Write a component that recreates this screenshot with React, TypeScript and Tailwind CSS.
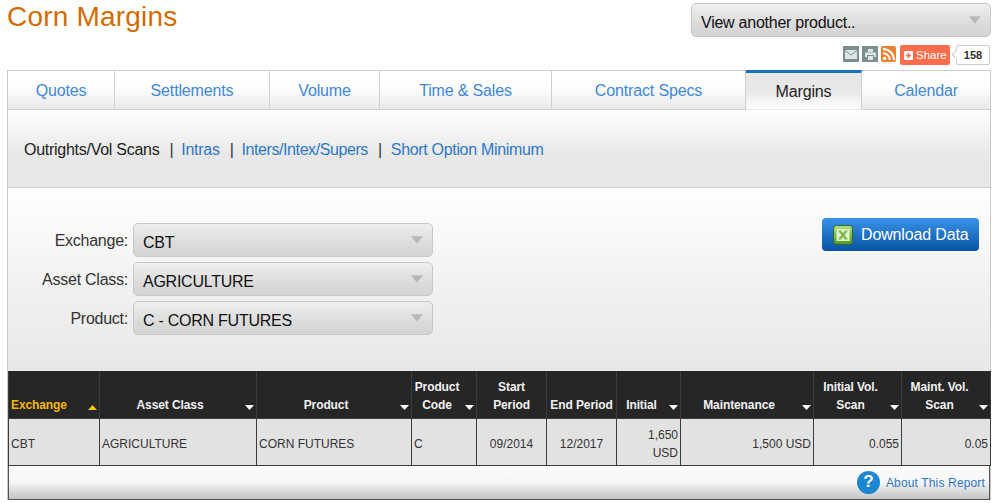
const tabs = [
  { label: "Quotes", width: "w-[107px]" },
  { label: "Settlements", width: "w-[155px]" },
  { label: "Volume", width: "w-[110px]" },
  { label: "Time & Sales", width: "w-[172px]" },
  { label: "Contract Specs", width: "w-[194px]" },
  { label: "Margins", width: "w-[116px]", active: true },
  { label: "Calendar", width: "flex-1" },
];

const filters = [
  { label: "Exchange:", value: "CBT" },
  { label: "Asset Class:", value: "AGRICULTURE" },
  { label: "Product:", value: "C - CORN FUTURES" },
];

function Caret({ up = false }: { up?: boolean }) {
  return (
    <svg
      width="9"
      height="5"
      viewBox="0 0 9 5"
      className={`absolute right-[2px] bottom-[8px] ${up ? "text-[#f5c518]" : "text-white"}`}
    >
      <path d={up ? "M0 5 L4.5 0 L9 5 Z" : "M0 0 L9 0 L4.5 5 Z"} fill="currentColor" />
    </svg>
  );
}

function SelectBox({ value, className }: { value: string; className: string }) {
  return (
    <div
      className={`relative flex items-center rounded-[5px] border border-[#c8c8c8] bg-gradient-to-b from-[#efefef] via-[#dcdcdc] via-60% to-[#d3d3d3] pl-[9px] text-[16px] tracking-[-0.25px] text-[#111] ${className}`}
    >
      <span className="pt-[6px]">{value}</span>
      <div className="absolute top-[1px] right-0 bottom-[1px] flex w-[30px] items-start justify-center rounded-r-[5px] pt-[11px]">
        <svg width="12" height="8" viewBox="0 0 12 8">
          <path d="M0.5 0.5 L11.5 0.5 L6 7.5 Z" fill="#b4b8b8" stroke="#c4c4c4" />
        </svg>
      </div>
    </div>
  );
}

function Th({
  children,
  width,
  caret = true,
  up = false,
  gold = false,
}: {
  children: React.ReactNode;
  width: string;
  caret?: boolean;
  up?: boolean;
  gold?: boolean;
}) {
  return (
    <th
      className={`relative border-x border-[#3c3c3c] px-[2px] pb-[4px] align-bottom text-center text-[12px] leading-[18px] font-bold tracking-[-0.1px] ${width} ${gold ? "text-left text-[#f5b800]" : "text-[#f2f2f2]"}`}
    >
      {children}
      {caret && <Caret up={up} />}
    </th>
  );
}

function Td({ children, align = "left" }: { children: React.ReactNode; align?: "left" | "center" | "right" }) {
  const alignClass = align === "right" ? "text-right" : align === "center" ? "text-center" : "text-left";
  return (
    <td className={`border border-[#3c3c3c] px-[2px] pt-[4px] align-middle text-[12px] leading-[18px] text-[#333] ${alignClass}`}>
      {children}
    </td>
  );
}

export default function App() {
  return (
    <div className="h-[503px] w-[992px] overflow-hidden bg-white font-['Liberation_Sans',Arial,sans-serif]">
      <header className="flex h-[70px] pr-px pl-[7px]">
        <h1 className="mt-[-1px] flex-1 text-[28px] leading-[36px] font-normal tracking-[0.2px] text-[#d36c00]">
          Corn Margins
        </h1>
        <div className="flex w-[300px] flex-col items-end pt-[3px]">
          <SelectBox value="View another product.." className="h-[34px] w-full" />
          <div className="mt-[8px] flex items-start pr-px">
            <div className="mt-px flex h-[16px] w-[16px] items-center justify-center bg-[#7c8e8e]">
              <svg width="12" height="9" viewBox="0 0 12 9">
                <path d="M0 0 H12 V9 H0 Z" fill="#dfe5e5" />
                <path d="M0 0.5 L6 5 L12 0.5" fill="none" stroke="#7c8e8e" />
              </svg>
            </div>
            <div className="mt-px ml-[3px] flex h-[16px] w-[16px] items-center justify-center bg-[#7c8e8e]">
              <svg width="11" height="11" viewBox="0 0 11 11">
                <path d="M3 0 H8 V3 H3 Z" fill="#dfe5e5" />
                <path d="M0 3.5 H11 V8 H9 V6 H2 V8 H0 Z" fill="#dfe5e5" />
                <path d="M3 7 H8 V11 H3 Z" fill="#dfe5e5" />
              </svg>
            </div>
            <svg width="15" height="16" viewBox="0 0 15 16" className="mt-px ml-[3px]">
              <rect width="15" height="16" rx="2" fill="#ee8030" />
              <circle cx="3.6" cy="12.4" r="1.7" fill="#fff" />
              <path d="M2 7.2 A6.8 6.8 0 0 1 8.8 14" fill="none" stroke="#fff" strokeWidth="2" />
              <path d="M2 3 A11 11 0 0 1 13 14" fill="none" stroke="#fff" strokeWidth="2" />
            </svg>
            <div className="ml-[4px] flex h-[20px] w-[50px] items-center gap-[3px] rounded-[2px] bg-[#fc6d4c] pl-[4px] text-[11.5px] text-white">
              <span className="flex h-[9px] w-[9px] items-center justify-center rounded-[1px] bg-white">
                <svg width="7" height="7" viewBox="0 0 7 7">
                  <path d="M2.7 1 H4.3 V2.7 H6 V4.3 H4.3 V6 H2.7 V4.3 H1 V2.7 H2.7 Z" fill="#fc6d4c" />
                </svg>
              </span>
              <span className="pt-[2px]">Share</span>
            </div>
            <div className="relative ml-[6px] flex h-[20px] w-[34px] items-center justify-center rounded-[2px] border border-[#ccc] bg-white text-[11px] font-bold text-[#333]">
              <span className="absolute top-[5px] left-[-4px] h-[7px] w-[7px] rotate-45 border-b border-l border-[#ccc] bg-white" />
              <span className="relative">158</span>
            </div>
          </div>
        </div>
      </header>

      <div className="mr-px ml-[7px] border-x border-[#c9c9c9]">
        <nav className="flex h-[40px] border-t border-[#cfcfcf]">
          {tabs.map((tab, i) => (
            <div
              key={tab.label}
              className={`flex items-center justify-center border-b pt-px text-[16px] tracking-[-0.15px] ${tab.width} ${i < tabs.length - 1 ? "border-r border-[#cfcfcf]" : "border-[#cfcfcf]"} ${
                tab.active
                  ? "mt-[-1px] border-t-[3px] border-b-transparent border-t-[#1a6fc0] bg-gradient-to-b from-[#e8e8e8] via-[#e8e8e8] via-50% to-white text-[#222]"
                  : "bg-gradient-to-b from-white via-white via-40% to-[#e9e9e9] text-[#3f87d8]"
              }`}
            >
              {tab.label}
            </div>
          ))}
        </nav>

        <div className="flex h-[78px] items-center border-b border-[#cfcfcf] bg-gradient-to-b from-white via-[#e8e8e8] via-60% to-[#e8e8e8] pt-[3px] pl-[16px] text-[16px] tracking-[-0.27px]">
          <span className="text-[#222]">Outrights/Vol Scans</span>
          <span className="ml-[10px] text-[#333]">|</span>
          <a className="ml-[8px] text-[#2e78c8]">Intras</a>
          <span className="ml-[10px] text-[#333]">|</span>
          <a className="ml-[8px] tracking-[-0.42px] text-[#2e78c8]">Inters/Intex/Supers</a>
          <span className="ml-[10px] text-[#333]">|</span>
          <a className="ml-[9px] tracking-[-0.32px] text-[#2e78c8]">Short Option Minimum</a>
        </div>

        <div className="flex h-[183px] items-start justify-between bg-gradient-to-b from-white via-[#f2f2f2] via-50% to-[#e8e8e8]">
          <div className="flex flex-col gap-[5px] pt-[35px]">
            {filters.map((filter) => (
              <div key={filter.label} className="flex items-start">
                <span className="w-[120px] pt-[6px] text-right text-[16px] leading-[24px] tracking-[-0.25px] text-[#333]">
                  {filter.label}
                </span>
                <SelectBox value={filter.value} className="ml-[5px] h-[34px] w-[300px]" />
              </div>
            ))}
          </div>
          <button
            type="button"
            className="mt-[30px] mr-[11px] flex h-[33px] w-[157px] items-center rounded-[4px] bg-gradient-to-b from-[#3794ea] to-[#0753a4] pl-[11px] text-[16px] tracking-[-0.15px] text-white"
          >
            <svg width="20" height="20" viewBox="0 0 20 20" className="shrink-0">
              <defs>
                <linearGradient id="sheetEdge" x1="0" y1="0" x2="0" y2="1">
                  <stop offset="0" stopColor="#b6e07a" />
                  <stop offset="1" stopColor="#4f9a1c" />
                </linearGradient>
              </defs>
              <rect x="0.5" y="0.5" width="19" height="19" rx="3" fill="url(#sheetEdge)" stroke="#2c6a2e" />
              <rect x="3.5" y="4" width="13" height="12" fill="#e4f2cf" />
              <path d="M5 5.5 H8 L10 8 L12 5.5 H15 L11.6 10 L15 14.5 H12 L10 12 L8 14.5 H5 L8.4 10 Z" fill="#7fb84a" />
            </svg>
            <span className="ml-[8px]">Download Data</span>
          </button>
        </div>

        <table className="w-full table-fixed border-collapse">
          <thead>
            <tr className="h-[47px] bg-[#262626]">
              <Th width="w-[91px]" gold up>
                Exchange
              </Th>
              <Th width="w-[157px]">
                <span className="pr-[16px]">Asset Class</span>
              </Th>
              <Th width="w-[155px]">
                <span className="pr-[16px]">Product</span>
              </Th>
              <Th width="w-[65px]">
                <span className="block pr-[14px]">
                  Product
                  <br />
                  Code
                </span>
              </Th>
              <Th width="w-[70px]" caret={false}>
                Start
                <br />
                Period
              </Th>
              <Th width="w-[70px]" caret={false}>
                End Period
              </Th>
              <Th width="w-[64px]">
                <span className="pr-[14px]">Initial</span>
              </Th>
              <Th width="w-[133px]">
                <span className="pr-[16px]">Maintenance</span>
              </Th>
              <Th width="w-[88px]">
                <span className="block pr-[14px]">
                  Initial Vol.
                  <br />
                  Scan
                </span>
              </Th>
              <Th width="w-[89px]">
                <span className="block pr-[13px]">
                  Maint. Vol.
                  <br />
                  Scan
                </span>
              </Th>
            </tr>
          </thead>
          <tbody>
            <tr className="h-[47px] bg-[#e2e2e2]">
              <Td>CBT</Td>
              <Td>AGRICULTURE</Td>
              <Td>CORN FUTURES</Td>
              <Td>C</Td>
              <Td align="center">09/2014</Td>
              <Td align="center">12/2017</Td>
              <Td align="right">
                1,650
                <br />
                USD
              </Td>
              <Td align="right">1,500 USD</Td>
              <Td align="right">0.055</Td>
              <Td align="right">0.05</Td>
            </tr>
          </tbody>
        </table>

        <div className="flex h-[34px] items-center justify-end border-x border-b border-[#555] bg-gradient-to-b from-[#fcfcfc] via-[#f6f6f6] via-50% to-[#c4c4c4] pr-[4px] text-[12px] tracking-[0.15px] text-[#2e78c8]">
          <span className="mr-[6px] flex h-[23px] w-[23px] items-center justify-center rounded-full bg-[#1b87d0] text-[17px] font-bold text-white">
            ?
          </span>
          <span className="pt-px">About This Report</span>
        </div>
      </div>
    </div>
  );
}
